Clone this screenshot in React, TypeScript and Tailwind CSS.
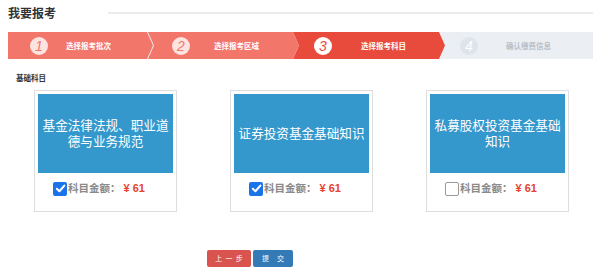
import React from "react";

const font = { fontFamily: '"Noto Sans CJK SC", "Noto Sans", sans-serif' };

type Step = {
  n: string;
  label: string;
  cls: string;
  circle: string;
  num: string;
  text: string;
  w: string;
  pl: string;
  gap: string;
  clip: string;
  ml: string;
};

const steps: Step[] = [
  {
    n: "1",
    label: "选择报考批次",
    cls: "bg-[#f3766b] z-[4]",
    circle: "bg-[#fde4e1]",
    num: "text-[#f3766b]",
    text: "text-white",
    w: "w-[145px]",
    pl: "pl-[22px]",
    gap: "gap-[18px]",
    clip: "[clip-path:polygon(0_0,calc(100%-6px)_0,100%_50%,calc(100%-6px)_100%,0_100%)]",
    ml: "",
  },
  {
    n: "2",
    label: "选择报考区域",
    cls: "bg-[#f3766b] z-[3]",
    circle: "bg-[#fde4e1]",
    num: "text-[#f3766b]",
    text: "text-white",
    w: "w-[151px]",
    pl: "pl-[24px]",
    gap: "gap-[24px]",
    clip: "[clip-path:polygon(0_0,calc(100%-6px)_0,100%_50%,calc(100%-6px)_100%,0_100%,6px_50%)]",
    ml: "-ml-[5px]",
  },
  {
    n: "3",
    label: "选择报考科目",
    cls: "bg-[#e84b3c] z-[2]",
    circle: "bg-white",
    num: "text-[#e84b3c]",
    text: "text-white",
    w: "w-[152px]",
    pl: "pl-[21px]",
    gap: "gap-[29px]",
    clip: "[clip-path:polygon(0_0,calc(100%-6px)_0,100%_50%,calc(100%-6px)_100%,0_100%,6px_50%)]",
    ml: "-ml-[6px]",
  },
  {
    n: "4",
    label: "确认缴费信息",
    cls: "bg-[#ebeef3] z-[1]",
    circle: "bg-[#dfe4ec]",
    num: "text-white",
    text: "text-[#b9bfc8]",
    w: "w-[154px]",
    pl: "pl-[21px]",
    gap: "gap-[28px]",
    clip: "",
    ml: "-ml-[6px]",
  },
];

const cards = [
  { title: "基金法律法规、职业道德与业务规范", checked: true },
  { title: "证券投资基金基础知识", checked: true },
  { title: "私募股权投资基金基础知识", checked: false },
];

function CheckBox({ checked }: { checked: boolean }) {
  if (checked) {
    return (
      <div className="w-[14px] h-[14px] rounded-[2px] bg-[#1a73e8] flex items-center justify-center">
        <svg width="11" height="11" viewBox="0 0 12 12">
          <path d="M2 6.3 L4.8 9 L10.2 2.8" fill="none" stroke="white" strokeWidth="2.2" strokeLinecap="round" strokeLinejoin="round" />
        </svg>
      </div>
    );
  }
  return <div className="w-[14px] h-[14px] rounded-[2px] border border-[#9a9a9a] bg-white" />;
}

export default function App() {
  return (
    <div className="w-[600px] h-[280px] bg-white overflow-hidden" style={font}>
      <div className="flex items-center h-[24px] pt-[1px]">
        <div className="pl-[8px] w-[108px] text-[12px] font-bold text-[#333] leading-none">我要报考</div>
        <div className="w-[485px] h-[2px] bg-[#ececec]" />
      </div>

      <div className="mt-[8px] ml-[8px] flex h-[27px] bg-[#ebeef3] w-[585px]">
        {steps.map((s) => (
          <div
            key={s.n}
            className={`relative flex items-center shrink-0 h-full ${s.w} ${s.pl} ${s.gap} ${s.cls} ${s.clip} ${s.ml}`}
          >
            <div className={`w-[18px] h-[18px] rounded-full flex items-center justify-center ${s.circle}`}>
              <span className={`italic text-[14px] leading-none ${s.num}`} style={{ fontFamily: '"Liberation Sans", sans-serif' }}>
                {s.n}
              </span>
            </div>
            <span className={`text-[7.5px] font-bold leading-none whitespace-nowrap ${s.text}`}>{s.label}</span>
          </div>
        ))}
      </div>

      <div className="mt-[15px] pl-[16px] text-[7.5px] font-bold text-[#333] leading-none">基础科目</div>

      <div className="mt-[8px] pl-[34px] flex gap-[53px]">
        {cards.map((c, i) => (
          <div key={i} className="w-[143px] h-[122px] border border-[#dedede] p-[3px] flex flex-col">
            <div className="h-[79px] bg-[#3498cc] flex items-center justify-center px-[4px]">
              <span className="text-white text-[12.6px] leading-[16px] text-center">{c.title}</span>
            </div>
            <div className="mt-[9px] pl-[15px] flex items-center gap-[1px]">
              <CheckBox checked={c.checked} />
              <span className="text-[10.5px] font-bold text-[#8a8a8a] leading-none whitespace-nowrap">科目金额：</span>
              <span
                className="ml-[2px] text-[11px] font-bold text-[#e8432d] leading-none whitespace-nowrap"
                style={{ fontFamily: '"Liberation Sans", sans-serif' }}
              >
                ¥ 61
              </span>
            </div>
          </div>
        ))}
      </div>

      <div className="mt-[38px] pl-[207px] flex gap-[2px]">
        <div className="w-[44px] h-[17px] rounded-[2px] bg-[#d9534f] flex items-center justify-center text-white text-[7px] whitespace-nowrap">
          上&nbsp;&nbsp;一&nbsp;&nbsp;步
        </div>
        <div className="w-[40px] h-[17px] rounded-[2px] bg-[#337ab7] flex items-center justify-center text-white text-[7px] whitespace-nowrap">
          提&nbsp;&nbsp;&nbsp;&nbsp;&nbsp;交
        </div>
      </div>
    </div>
  );
}
